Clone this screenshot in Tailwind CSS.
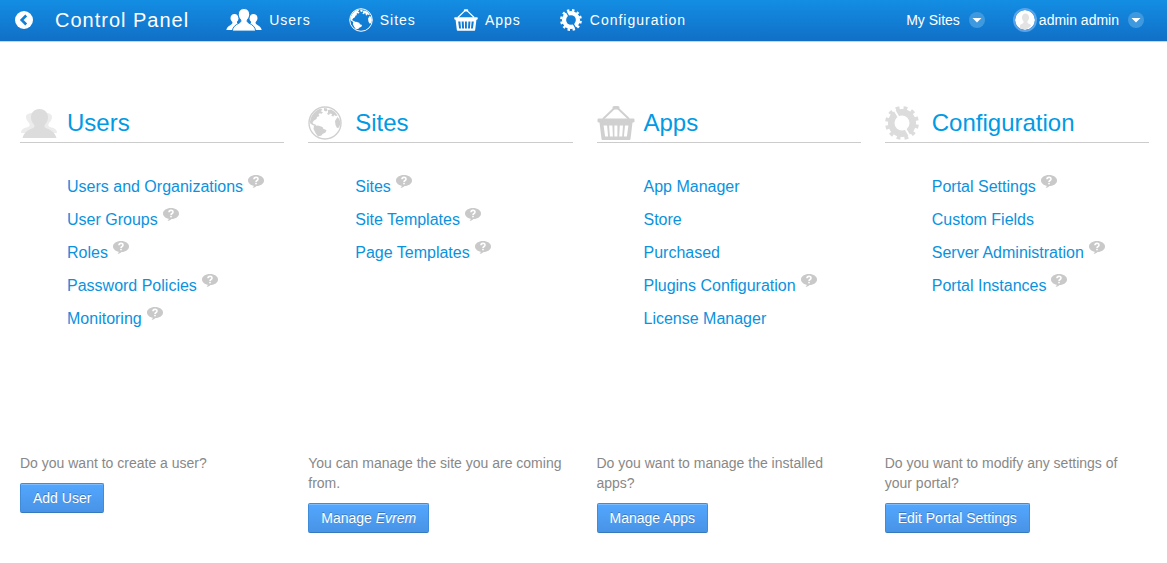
<!DOCTYPE html>
<html lang="en">
<head>
<meta charset="utf-8">
<meta name="viewport" content="width=device-width, initial-scale=1">
<title>Control Panel</title>
<script src="https://cdn.jsdelivr.net/npm/@tailwindcss/browser@4"></script>
</head>
<body class="bg-white font-['Liberation_Sans',Arial,sans-serif] text-sm text-[#888]">

<!-- Shared icon shapes -->
<svg class="absolute size-0" aria-hidden="true">
  <symbol id="globe" viewBox="0 0 34 34">
    <circle cx="17" cy="17" r="16" fill="none" stroke="currentColor" stroke-width="1.400"/>
    <path fill="currentColor" d="M13 2.500l1.500 1.500-2 1 2.500 1.500-2 1.500-1-1-1.500 1.500 1 1.500-2.500 1-.5 2-2.500 1.500-1.500 2 1 1.500 2 .5 1 2-3-1-2.500-1.500L2 17C2 10 7 4 13 2.500zM16 2l3 .5.500 2-1.500 1-2-1zM20 4l3-.5 4 2.500 2.500 3.500-1.500.5-2-1-.5 1.500-2-.5.5-2-2-.5-1 1.500-2-1 1-1.500zM29.500 11l2 2.500 1 4-1.500 4-2 .5-1.500-3-.5-4zM6 20l4-.5 4.500 1.500 1 2 3 1-1 2.500-3 1.500-1 1.500-3.500 1-2.500-3.500-2-4z"/>
  </symbol>
  <symbol id="basket" viewBox="0 0 38 34">
    <path fill="none" stroke="currentColor" stroke-width="1.900" d="M6 13L17 2.500M32 13L21 2.500"/>
    <rect x="15.500" y="0" width="7" height="3.500" rx="1.500" fill="currentColor"/>
    <path fill="currentColor" fill-rule="evenodd" d="M1.500 12.500h35q1 0 1 1v2q0 1-1.500 1h-.5L33.500 33q-.2 1-1 1h-27q-.8 0-1-1L2.500 16.500H2q-1.500 0-1.500-1v-2q0-1 1-1zM6.600 19.500l1.500 11h3l-1-11zM12.100 19.500l.8 11h3l-.5-11zM17.400 19.500v11h3v-11zM22.800 19.500l-.6 11h3l.8-11zM28 19.500l-1.100 11h3l1.500-11z"/>
  </symbol>
  <mask id="gear-cut" maskUnits="userSpaceOnUse" x="0" y="0" width="34" height="34">
    <rect width="34" height="34" fill="white"/>
    <circle cx="17" cy="17" r="7.500" fill="black"/>
    <path d="M8.500 2.500L17 17L25.500 31.500" stroke="black" stroke-width="1.900"/>
  </mask>
  <symbol id="gear" viewBox="0 0 34 34">
    <g mask="url(#gear-cut)" fill="none" stroke="currentColor">
      <circle cx="17" cy="17" r="10" stroke-width="8"/>
      <circle cx="17" cy="17" r="15" stroke-width="3.800" pathLength="120" stroke-dasharray="4.800 5.200" stroke-dashoffset="-2"/>
    </g>
  </symbol>
  <symbol id="help" viewBox="0 0 16 13">
    <path fill="#c9c9c9" d="M8 0c4.500 0 8 2.400 8 5.500S12.700 11 8.500 11c-1 1-2.200 1.800-4 2 .8-.8 1.200-1.500 1.200-2.300C2.300 10.100 0 8 0 5.500 0 2.400 3.500 0 8 0z"/>
    <path fill="none" stroke="white" stroke-width="1.600" d="M6 4.200C6 1.800 10 1.700 10 4c0 1.600-2 1.400-2 3"/>
    <rect x="7.200" y="7.800" width="1.600" height="1.500" fill="white"/>
  </symbol>
</svg>

<header class="flex h-[42px] items-center border-b border-[#b8d9f3] bg-linear-to-b from-[#138ee3] to-[#116fc7] pr-[23px] pb-px pl-[15px] text-white">
  <a href="#" aria-label="Back" class="shrink-0">
    <svg class="size-[18px]" viewBox="0 0 18 18"><circle cx="9" cy="9" r="9" fill="white"/><path d="M11.200 4.500L6.700 9l4.500 4.500" fill="none" stroke="#127fd5" stroke-width="2.600"/></svg>
  </a>
  <h1 class="ml-[22px] text-xl tracking-[1px] whitespace-nowrap">Control Panel</h1>
  <nav class="ml-[37px] flex gap-[38px] tracking-[1px]">
    <a href="#" class="flex items-center gap-[7px]">
      <svg class="h-6 w-9" viewBox="0 0 36 24" fill="white">
        <path d="M8.500 6c2.500 0 4 1.800 4 4.200 0 1.500-.6 2.600-1.400 3.400-.5 1 .3 1.700 1.200 2.200l-5.100 6.200H.3c.5-2.600 2.500-4 4.600-5.200 1.300-.7 2-1.800 1.200-3-.8-1-1.600-2-1.600-3.600C4.500 7.800 6 6 8.500 6zM27.500 6c-2.500 0-4 1.800-4 4.200 0 1.500.6 2.600 1.400 3.400.5 1-.3 1.700-1.200 2.200l5.100 6.200h6.900c-.5-2.600-2.500-4-4.600-5.200-1.300-.7-2-1.800-1.200-3 .8-1 1.600-2 1.600-3.600C31.500 7.800 30 6 27.500 6z"/>
        <path stroke="#127fd5" d="M18 .5c3.600 0 5.700 2.500 5.700 5.800 0 2.300-1 4-2.200 5.200-.8 1.500-.3 2.700 1.300 3.500 4 2 6.400 4 6.900 8.100H6.300c.5-4.100 2.900-6.100 6.900-8.100 1.600-.8 2.100-2 1.300-3.500-1.200-1.200-2.200-2.900-2.200-5.200C12.300 3 14.400.5 18 .5z"/>
      </svg>Users</a>
    <a href="#" class="flex items-center gap-[7px]"><svg class="size-6"><use href="#globe"/></svg>Sites</a>
    <a href="#" class="flex items-center gap-[7px]"><svg class="size-6"><use href="#basket"/></svg>Apps</a>
    <a href="#" class="flex items-center gap-[7px]"><svg class="h-[22px] w-6"><use href="#gear"/></svg>Configuration</a>
  </nav>
  <div class="ml-auto flex items-center gap-[30px] whitespace-nowrap">
    <button type="button" class="flex items-center gap-[9px]">My Sites
      <svg class="size-4" viewBox="0 0 16 16"><circle cx="8" cy="8" r="8" fill="#3f99de"/><path fill="white" d="M3.500 6h9L8 10.500z"/></svg>
    </button>
    <button type="button" class="flex items-center gap-[9px]">
      <span class="flex items-center gap-1">
        <svg class="size-5 rounded-full ring-2 ring-[#5ba3ea]" viewBox="0 0 20 20"><circle cx="10" cy="10" r="10" fill="white"/><path fill="#e3e3e3" d="M10.500 3.500c2.200 0 3.500 1.700 3.500 4 0 1.700-.8 3-1.500 3.700-.3 1.500 0 2 1.500 2.600 1.200.5 1.800 1 2 2A10 10 0 0 1 5 18.600v-2.800c.2-1 .8-1.500 2-2 1.500-.6 1.800-1.100 1.500-2.600C7.800 10.500 7 9.200 7 7.500c0-2.300 1.300-4 3.500-4z"/></svg>
        admin admin</span>
      <svg class="size-4" viewBox="0 0 16 16"><circle cx="8" cy="8" r="8" fill="#3f99de"/><path fill="white" d="M3.500 6h9L8 10.500z"/></svg>
    </button>
  </div>
</header>

<main class="grid grid-cols-4 gap-6 pt-[62px] pr-[18px] pb-6 pl-5">
  <section>
    <h2 class="flex h-[39px] items-center gap-[9px] border-b border-[#ccc] pb-px text-2xl text-[#009ae5]">
      <svg class="h-[34px] w-[38px]" viewBox="0 0 38 34">
        <path fill="#ececec" d="M13 7c3 0 5 2 5 5l2 15H1c0-4 3-5 7-6 2-1 2-2 1-4-2-2-3-4-3-6 0-3 3-4 7-4zM26 7c-3 0-5 2-5 5l-2 15h18c0-4-3-5-7-6-2-1-2-2-1-4 2-2 3-4 3-6 0-3-3-4-6-4z"/>
        <path fill="#dcdcdc" d="M19.500 3c5.500 0 8.500 3.700 8.500 8.500 0 3-1.400 5.300-3 7-1.200 2-.5 3 2 4 5.500 2.200 8 4.500 9.500 9.500h-34c1.500-5 4-7.300 9.500-9.500 2.500-1 3.200-2 2-4-1.600-1.700-3-4-3-7C11 6.700 14 3 19.500 3z"/>
      </svg>Users</h2>
    <ul class="mt-[27px] min-h-[283px] pl-[47px] text-base leading-[33px] text-[#0b92de]">
      <li class="flex gap-[5px]"><a href="#">Users and Organizations</a><svg class="mt-[5px] h-[13px] w-4"><use href="#help"/></svg></li>
      <li class="flex gap-[5px]"><a href="#">User Groups</a><svg class="mt-[5px] h-[13px] w-4"><use href="#help"/></svg></li>
      <li class="flex gap-[5px]"><a href="#">Roles</a><svg class="mt-[5px] h-[13px] w-4"><use href="#help"/></svg></li>
      <li class="flex gap-[5px]"><a href="#">Password Policies</a><svg class="mt-[5px] h-[13px] w-4"><use href="#help"/></svg></li>
      <li class="flex gap-[5px]"><a href="#">Monitoring</a><svg class="mt-[5px] h-[13px] w-4"><use href="#help"/></svg></li>
    </ul>
    <p class="mb-[10px] pr-1 leading-5">Do you want to create a user?</p>
    <button type="button" class="h-[30px] rounded-xs border border-[#3f8cdb] border-b-[#357abd] bg-linear-to-b from-[#53a7ff] to-[#4893e6] px-3 text-white inset-shadow-[0_1px_0_#7dbcff] text-shadow-[0_-1px_0_#00000040]">Add User</button>
  </section>

  <section>
    <h2 class="flex h-[39px] items-center gap-[9px] border-b border-[#ccc] pb-px text-2xl text-[#009ae5]">
      <span class="w-[38px] text-[#d0d0d0]"><svg class="size-[34px]"><use href="#globe"/></svg></span>Sites</h2>
    <ul class="mt-[27px] min-h-[283px] pl-[47px] text-base leading-[33px] text-[#0b92de]">
      <li class="flex gap-[5px]"><a href="#">Sites</a><svg class="mt-[5px] h-[13px] w-4"><use href="#help"/></svg></li>
      <li class="flex gap-[5px]"><a href="#">Site Templates</a><svg class="mt-[5px] h-[13px] w-4"><use href="#help"/></svg></li>
      <li class="flex gap-[5px]"><a href="#">Page Templates</a><svg class="mt-[5px] h-[13px] w-4"><use href="#help"/></svg></li>
    </ul>
    <p class="mb-[10px] pr-1 leading-5">You can manage the site you are coming from.</p>
    <button type="button" class="h-[30px] rounded-xs border border-[#3f8cdb] border-b-[#357abd] bg-linear-to-b from-[#53a7ff] to-[#4893e6] px-3 text-white inset-shadow-[0_1px_0_#7dbcff] text-shadow-[0_-1px_0_#00000040]">Manage <em>Evrem</em></button>
  </section>

  <section>
    <h2 class="flex h-[39px] items-center gap-[9px] border-b border-[#ccc] pb-px text-2xl text-[#009ae5]">
      <span class="w-[38px] text-[#d0d0d0]"><svg class="h-[34px] w-[38px]"><use href="#basket"/></svg></span>Apps</h2>
    <ul class="mt-[27px] min-h-[283px] pl-[47px] text-base leading-[33px] text-[#0b92de]">
      <li class="flex gap-[5px]"><a href="#">App Manager</a></li>
      <li class="flex gap-[5px]"><a href="#">Store</a></li>
      <li class="flex gap-[5px]"><a href="#">Purchased</a></li>
      <li class="flex gap-[5px]"><a href="#">Plugins Configuration</a><svg class="mt-[5px] h-[13px] w-4"><use href="#help"/></svg></li>
      <li class="flex gap-[5px]"><a href="#">License Manager</a></li>
    </ul>
    <p class="mb-[10px] pr-1 leading-5">Do you want to manage the installed apps?</p>
    <button type="button" class="h-[30px] rounded-xs border border-[#3f8cdb] border-b-[#357abd] bg-linear-to-b from-[#53a7ff] to-[#4893e6] px-3 text-white inset-shadow-[0_1px_0_#7dbcff] text-shadow-[0_-1px_0_#00000040]">Manage Apps</button>
  </section>

  <section>
    <h2 class="flex h-[39px] items-center gap-[9px] border-b border-[#ccc] pb-px text-2xl text-[#009ae5]">
      <span class="w-[38px] text-[#dcdcdc]"><svg class="size-[34px]"><use href="#gear"/></svg></span>Configuration</h2>
    <ul class="mt-[27px] min-h-[283px] pl-[47px] text-base leading-[33px] text-[#0b92de]">
      <li class="flex gap-[5px]"><a href="#">Portal Settings</a><svg class="mt-[5px] h-[13px] w-4"><use href="#help"/></svg></li>
      <li class="flex gap-[5px]"><a href="#">Custom Fields</a></li>
      <li class="flex gap-[5px]"><a href="#">Server Administration</a><svg class="mt-[5px] h-[13px] w-4"><use href="#help"/></svg></li>
      <li class="flex gap-[5px]"><a href="#">Portal Instances</a><svg class="mt-[5px] h-[13px] w-4"><use href="#help"/></svg></li>
    </ul>
    <p class="mb-[10px] pr-1 leading-5">Do you want to modify any settings of your portal?</p>
    <button type="button" class="h-[30px] rounded-xs border border-[#3f8cdb] border-b-[#357abd] bg-linear-to-b from-[#53a7ff] to-[#4893e6] px-3 text-white inset-shadow-[0_1px_0_#7dbcff] text-shadow-[0_-1px_0_#00000040]">Edit Portal Settings</button>
  </section>
</main>
</body>
</html>
